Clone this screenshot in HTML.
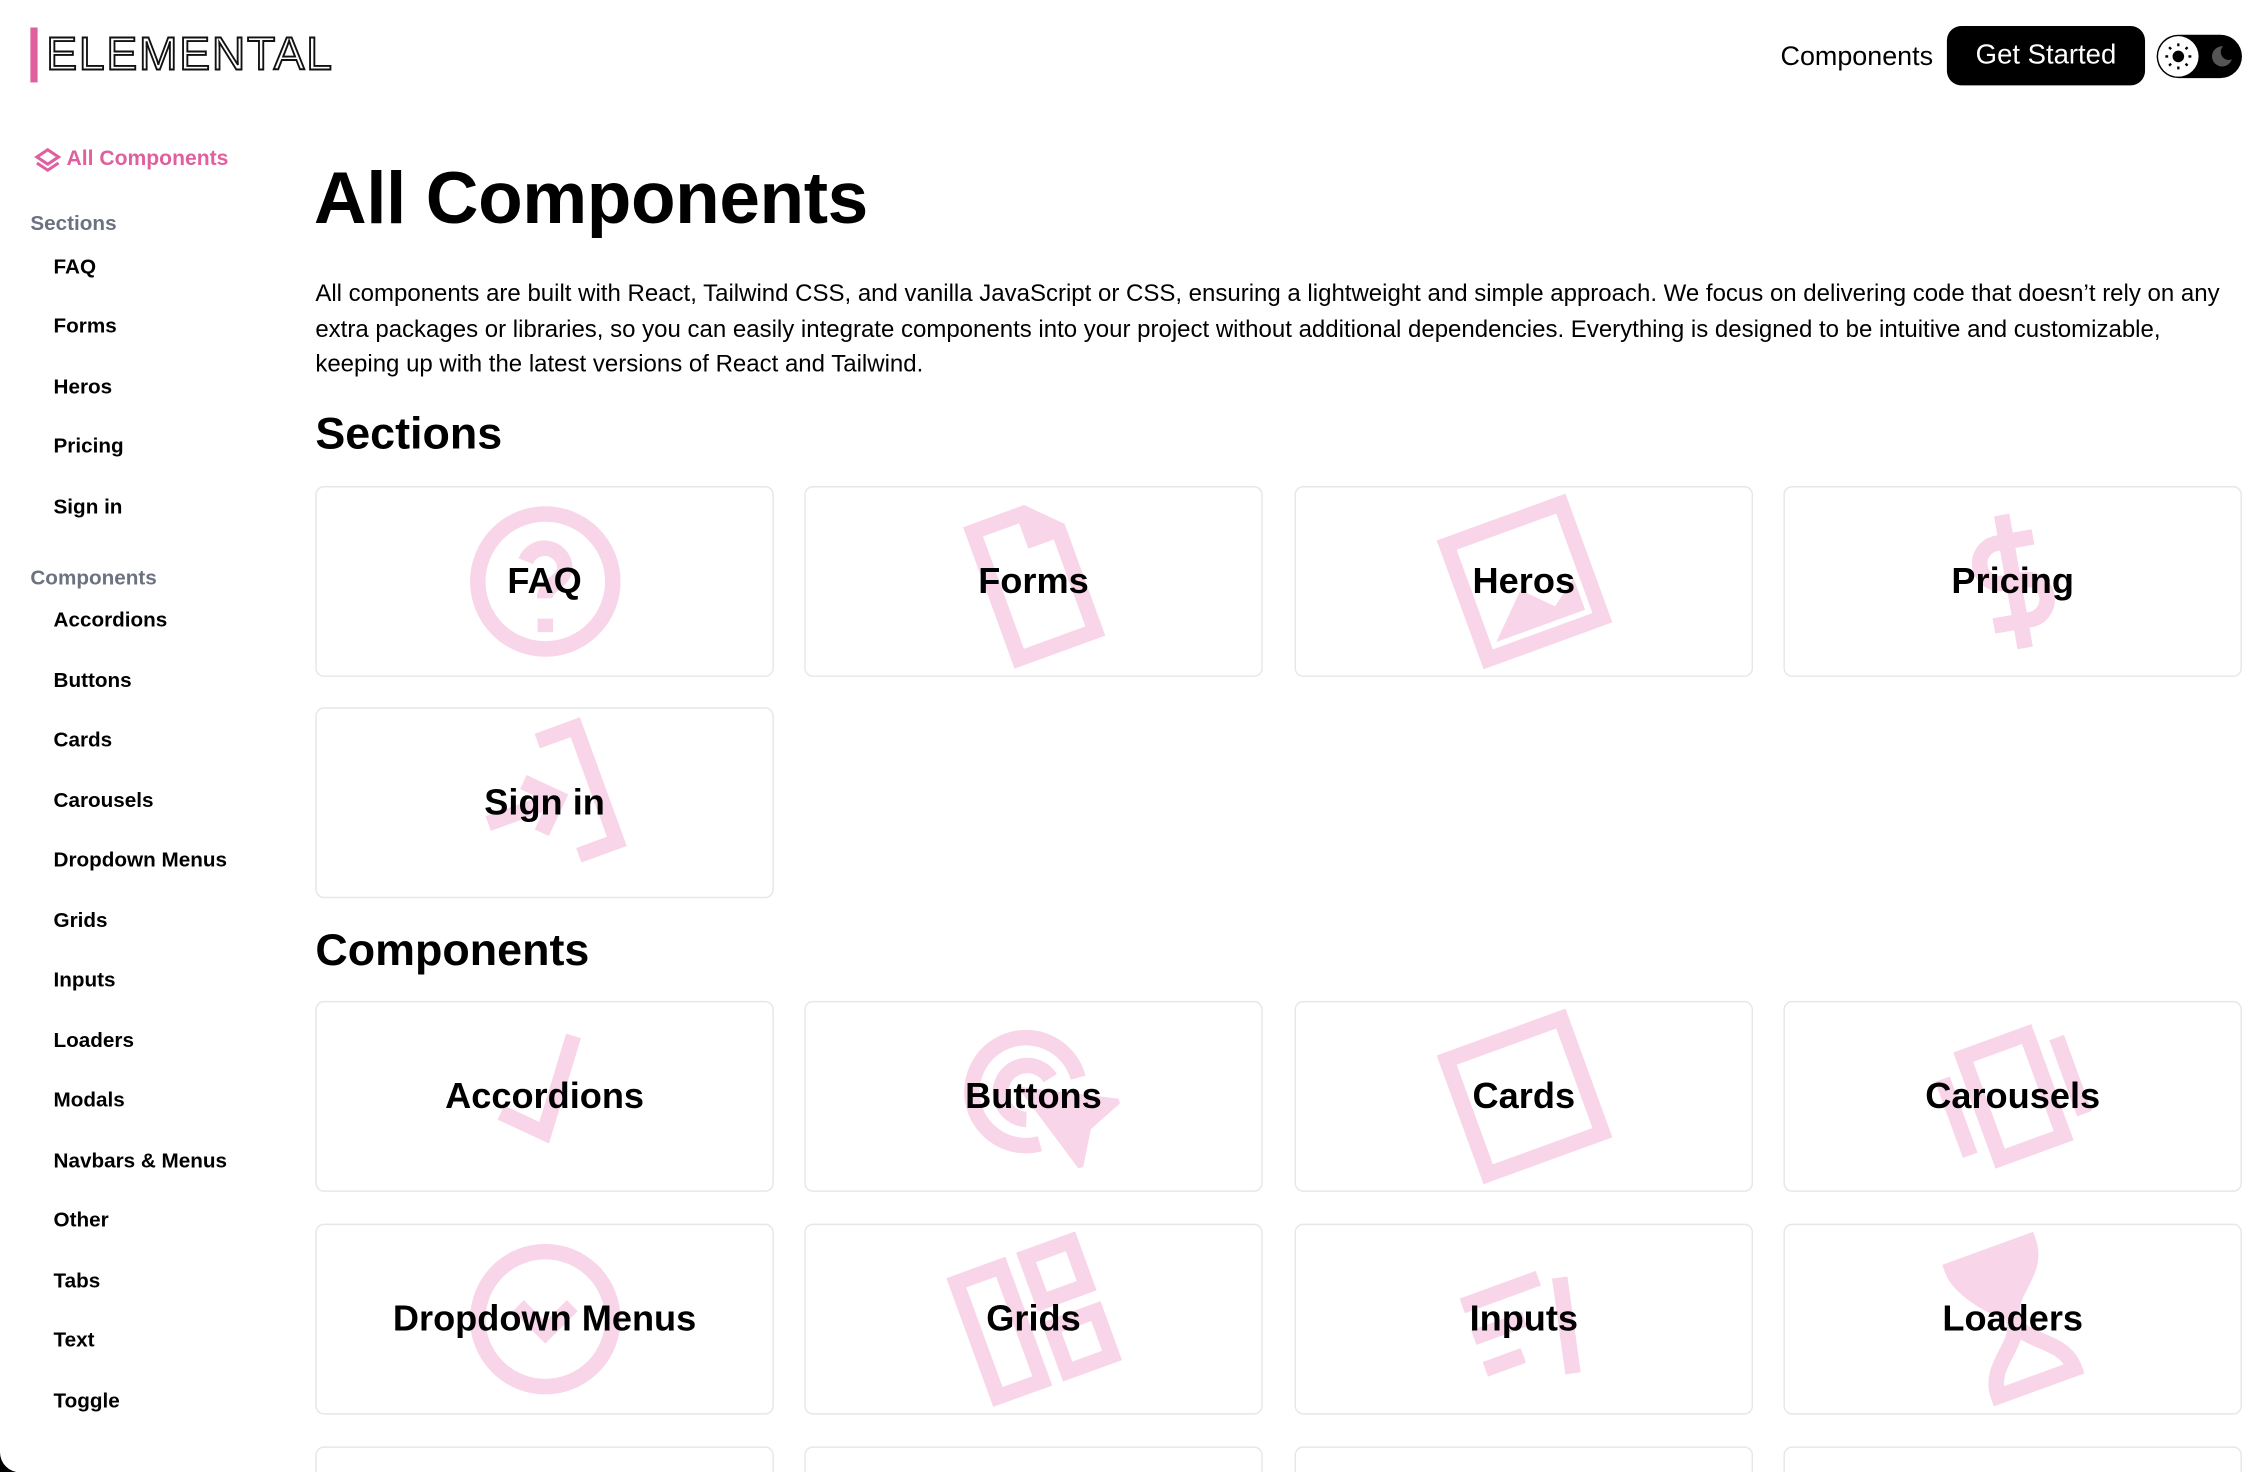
<!DOCTYPE html>
<html><head><meta charset="utf-8"><style>
html,body{margin:0;padding:0;background:#000;width:2268px;height:1472px;overflow:hidden}
#w{position:absolute;left:0;top:0;width:1568px;height:1018px;transform:scale(1.446429);transform-origin:0 0;background:#fff;border-bottom-left-radius:14px;overflow:hidden;font-family:"Liberation Sans",Arial,sans-serif;color:#000}
.a{position:absolute}
.logo{left:32px;top:19px;font-size:32px;letter-spacing:1.2px;color:#fff;-webkit-text-stroke:1.3px #111;font-weight:400}
.side{font-size:14.3px;font-weight:700}
.card{position:absolute;width:315px;height:130px;border:1px solid #e5e7eb;border-radius:6px;overflow:hidden;display:flex;align-items:center;justify-content:center}
.card span{position:relative;font-size:25px;font-weight:700;z-index:2}
.card svg{position:absolute;left:50%;top:50%;width:112px;height:112px;margin:-56px 0 0 -56px;transform:rotate(-20deg);fill:none;stroke:#f8d5e8;stroke-width:2.3;stroke-linecap:butt;stroke-linejoin:miter}
</style></head><body><div id="w">
<div class="a" style="left:21px;top:19px;width:5px;height:38px;background:#e0609f"></div>
<div class="a logo">ELEMENTAL</div>
<div class="a" style="left:1231px;top:28px;font-size:18.6px">Components</div>
<div class="a" style="left:1346px;top:18px;width:137px;height:41px;background:#000;border-radius:10px;color:#fff;font-size:19px;text-align:center;line-height:41px">Get Started</div>
<div class="a" style="left:1491px;top:24px;width:59px;height:30px;background:#000;border-radius:15px"></div>
<div class="a" style="left:1492px;top:25px;width:28px;height:28px;background:#fff;border-radius:50%"></div>
<svg class="a" style="left:1496px;top:29px" width="20" height="20" viewBox="0 0 20 20"><circle cx="10" cy="10" r="4" fill="#000"/><g stroke="#000" stroke-width="1.6"><path d="M10 1v2M10 17v2M1 10h2M17 10h2M3.6 3.6l1.4 1.4M15 15l1.4 1.4M3.6 16.4L5 15M15 5l1.4-1.4"/></g></svg>
<svg class="a" style="left:1528px;top:31px" width="16" height="16" viewBox="0 0 16 16"><path d="M9 1a7 7 0 1 0 6 9A5.5 5.5 0 0 1 9 1z" fill="#555"/></svg>

<svg class="a" style="left:23px;top:101px" width="20" height="20" viewBox="0 0 24 24" fill="none" stroke="#e0609f" stroke-width="2.5"><path d="M12 3l9 6-9 6-9-6z"/><path d="M3 14l9 6 9-6"/></svg>
<div class="a side" style="left:46px;top:102px;color:#e0609f;font-size:14.6px">All Components</div>
<div class="a" style="left:21px;top:147px;font-size:14.3px;font-weight:700;color:#6b7280">Sections</div>
<div class="a side" style="left:37px;top:177px">FAQ</div>
<div class="a side" style="left:37px;top:218px">Forms</div>
<div class="a side" style="left:37px;top:260px">Heros</div>
<div class="a side" style="left:37px;top:301px">Pricing</div>
<div class="a side" style="left:37px;top:343px">Sign in</div>
<div class="a" style="left:21px;top:392px;font-size:14.3px;font-weight:700;color:#6b7280">Components</div>
<div class="a side" style="left:37px;top:421px">Accordions</div>
<div class="a side" style="left:37px;top:463px">Buttons</div>
<div class="a side" style="left:37px;top:504px">Cards</div>
<div class="a side" style="left:37px;top:546px">Carousels</div>
<div class="a side" style="left:37px;top:587px">Dropdown Menus</div>
<div class="a side" style="left:37px;top:629px">Grids</div>
<div class="a side" style="left:37px;top:670px">Inputs</div>
<div class="a side" style="left:37px;top:712px">Loaders</div>
<div class="a side" style="left:37px;top:753px">Modals</div>
<div class="a side" style="left:37px;top:795px">Navbars &amp; Menus</div>
<div class="a side" style="left:37px;top:836px">Other</div>
<div class="a side" style="left:37px;top:878px">Tabs</div>
<div class="a side" style="left:37px;top:919px">Text</div>
<div class="a side" style="left:37px;top:961px">Toggle</div>

<div class="a" style="left:217px;top:107px;font-size:50.5px;font-weight:700;letter-spacing:-0.3px">All Components</div>
<div class="a" style="left:218px;top:191px;width:1330px;font-size:16.6px;line-height:24.6px">All components are built with React, Tailwind CSS, and vanilla JavaScript or CSS, ensuring a lightweight and simple approach. We focus on delivering code that doesn’t rely on any extra packages or libraries, so you can easily integrate components into your project without additional dependencies. Everything is designed to be intuitive and customizable, keeping up with the latest versions of React and Tailwind.</div>
<div class="a" style="left:218px;top:282px;font-size:31px;font-weight:700">Sections</div>
<div class="a" style="left:218px;top:639px;font-size:31px;font-weight:700">Components</div>

<div class="card" style="left:218px;top:336px"><svg viewBox="0 0 24 24" style="transform:none"><circle cx="12" cy="12" r="10"/><path d="M9.1 9a3 3 0 0 1 5.8 1c0 2-3 2.5-3 4.5"/><path d="M12 17.5v2"/></svg><span>FAQ</span></div>
<div class="card" style="left:556px;top:336px"><svg viewBox="0 0 24 24"><path d="M14 2H6v20h12V6z"/><path d="M14 2v4h4" fill="#f8d5e8"/></svg><span>Forms</span></div>
<div class="card" style="left:895px;top:336px"><svg viewBox="0 0 24 24"><rect x="3" y="3" width="18" height="18"/><path d="M5 19l6-6 4 4 4-3v5z" fill="#f8d5e8" stroke="none"/></svg><span>Heros</span></div>
<div class="card" style="left:1233px;top:336px"><svg viewBox="0 0 24 24" style="transform:rotate(-10deg)"><path d="M12 2v20M16 6h-5.5a3 3 0 0 0 0 6h3a3 3 0 0 1 0 6H8"/></svg><span>Pricing</span></div>
<div class="card" style="left:218px;top:489px"><svg viewBox="0 0 24 24"><path d="M14 3h6v18h-6"/><path d="M3 12h11M10 8l4 4-4 4"/></svg><span>Sign in</span></div>

<div class="card" style="left:218px;top:692px"><svg viewBox="0 0 24 24"><path d="M5 12l5 5 9-12"/></svg><span>Accordions</span></div>
<div class="card" style="left:556px;top:692px"><svg viewBox="0 0 24 24" style="transform:rotate(-15deg)"><path d="M19 11a8 8 0 1 0-8 8"/><path d="M15 10a4 4 0 1 0-5 5"/><path d="M12 12l4 10 2-4 4-2z" fill="#f8d5e8"/></svg><span>Buttons</span></div>
<div class="card" style="left:895px;top:692px"><svg viewBox="0 0 24 24"><rect x="3" y="3" width="18" height="18"/></svg><span>Cards</span></div>
<div class="card" style="left:1233px;top:692px"><svg viewBox="0 0 24 24"><rect x="7" y="4" width="10" height="16"/><path d="M3 6v12M21 6v12"/></svg><span>Carousels</span></div>
<div class="card" style="left:218px;top:846px"><svg viewBox="0 0 24 24" style="transform:none"><circle cx="12" cy="12" r="10"/><path d="M8 10l4 4 4-4"/></svg><span>Dropdown Menus</span></div>
<div class="card" style="left:556px;top:846px"><svg viewBox="0 0 24 24"><rect x="3" y="3" width="7" height="18"/><rect x="14" y="3" width="7" height="7"/><rect x="14" y="14" width="7" height="7"/></svg><span>Grids</span></div>
<div class="card" style="left:895px;top:846px"><svg viewBox="0 0 24 24"><path d="M4 7h12M4 12h8M4 17h6M19 8l-3 14"/></svg><span>Inputs</span></div>
<div class="card" style="left:1233px;top:846px"><svg viewBox="0 0 24 24"><path d="M5 2h14M5 22h14M6 2c0 5 6 6 6 10s-6 5-6 10h12c0-5-6-6-6-10s6-5 6-10z"/><path d="M6 2h12c0 4-6 6-6 8S6 6 6 2z" fill="#f8d5e8"/></svg><span>Loaders</span></div>
<div class="card" style="left:218px;top:1000px;height:30px"></div>
<div class="card" style="left:556px;top:1000px;height:30px"></div>
<div class="card" style="left:895px;top:1000px;height:30px"></div>
<div class="card" style="left:1233px;top:1000px;height:30px"></div>
</div></body></html>
